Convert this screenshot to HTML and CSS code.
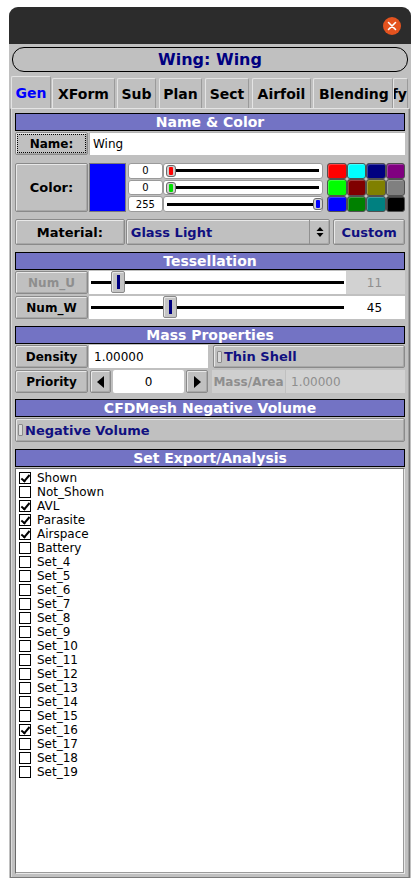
FILE: index.html
```html
<!DOCTYPE html>
<html>
<head>
<meta charset="utf-8">
<link rel="stylesheet" href="styles.css">
</head>
<body>
<div class="window">
  <div class="titlebar">
    <span class="close"><svg width="18" height="18" viewBox="0 0 18 18"><circle cx="9" cy="9" r="9" fill="#e4531f"/><path d="M5.5 5.5 L12.5 12.5 M12.5 5.5 L5.5 12.5" stroke="#fff" stroke-width="1.6" stroke-linecap="round"/></svg></span>
  </div>
  <div class="body">
    <div class="pill">Wing: Wing</div>
    <div class="tabs">
      <div class="tab sel t-gen">Gen</div>
      <div class="tab t-xform">XForm</div>
      <div class="tab t-sub">Sub</div>
      <div class="tab t-plan">Plan</div>
      <div class="tab t-sect">Sect</div>
      <div class="tab t-airfoil">Airfoil</div>
      <div class="tab t-blend">Blending</div>
      <div class="tab t-mod"><span>Modify</span></div>
    </div>
    <div class="panel">
      <div class="hdr">Name &amp; Color</div>
      <div class="row r-name">
        <div class="btn lbl focus">Name:</div>
        <div class="input grow">Wing</div>
      </div>

      <div class="row r-color">
        <div class="btn lbl">Color:</div>
        <div class="cswatch"></div>
        <div class="rgb">
          <div class="rgbrow"><div class="val">0</div><div class="cslider"><div class="track"></div><div class="chandle red" style="left:2px"></div></div></div>
          <div class="rgbrow"><div class="val">0</div><div class="cslider"><div class="track"></div><div class="chandle green" style="left:2px"></div></div></div>
          <div class="rgbrow"><div class="val">255</div><div class="cslider"><div class="track"></div><div class="chandle blue" style="left:149px"></div></div></div>
        </div>
        <div class="palette">
          <div class="sw" style="background:#ff0000"></div>
          <div class="sw" style="background:#00ffff"></div>
          <div class="sw" style="background:#000080"></div>
          <div class="sw" style="background:#800080"></div>
          <div class="sw" style="background:#00ff00"></div>
          <div class="sw" style="background:#800000"></div>
          <div class="sw" style="background:#808000"></div>
          <div class="sw" style="background:#808080"></div>
          <div class="sw" style="background:#0000ff"></div>
          <div class="sw" style="background:#008000"></div>
          <div class="sw" style="background:#008080"></div>
          <div class="sw" style="background:#000000"></div>
        </div>
      </div>

      <div class="row r-mat">
        <div class="btn matlbl">Material:</div>
        <div class="btn choice">
          <span class="choice-text">Glass Light</span>
          <span class="choice-arrow"><svg width="8" height="12" viewBox="0 0 8 12"><path d="M4 1 L7.5 5 L0.5 5 Z M4 11 L7.5 7 L0.5 7 Z" fill="#000"/></svg></span>
        </div>
        <div class="btn custom">Custom</div>
      </div>

      <div class="hdr">Tessellation</div>
      <div class="row r-tessu">
        <div class="btn lbl dim">Num_U</div>
        <div class="slider"><div class="strack"></div><div class="shandle" style="left:22px"></div></div>
        <div class="numval dimval">11</div>
      </div>
      <div class="row r-tessw">
        <div class="btn lbl">Num_W</div>
        <div class="slider"><div class="strack"></div><div class="shandle" style="left:74px"></div></div>
        <div class="numval">45</div>
      </div>

      <div class="hdr">Mass Properties</div>
      <div class="row r-dens">
        <div class="btn lbl">Density</div>
        <div class="input dens">1.00000</div>
        <div class="btn toggle thin"><span class="led"></span>Thin Shell</div>
      </div>
      <div class="row r-prio">
        <div class="btn lbl">Priority</div>
        <div class="btn arrow a-left"><svg width="7" height="12" viewBox="0 0 7 12"><path d="M7 0 L0 6 L7 12 Z" fill="#000"/></svg></div>
        <div class="input prio">0</div>
        <div class="btn arrow a-right"><svg width="7" height="12" viewBox="0 0 7 12"><path d="M0 0 L7 6 L0 12 Z" fill="#000"/></svg></div>
        <div class="massarea">
          <div class="ma-lbl">Mass/Area</div>
          <div class="ma-val">1.00000</div>
        </div>
      </div>

      <div class="hdr">CFDMesh Negative Volume</div>
      <div class="row r-neg">
        <div class="btn toggle neg"><span class="led"></span>Negative Volume</div>
      </div>

      <div class="hdr">Set Export/Analysis</div>
      <div class="list">
        <div class="item"><span class="cb on"></span>Shown</div>
        <div class="item"><span class="cb"></span>Not_Shown</div>
        <div class="item"><span class="cb on"></span>AVL</div>
        <div class="item"><span class="cb on"></span>Parasite</div>
        <div class="item"><span class="cb on"></span>Airspace</div>
        <div class="item"><span class="cb"></span>Battery</div>
        <div class="item"><span class="cb"></span>Set_4</div>
        <div class="item"><span class="cb"></span>Set_5</div>
        <div class="item"><span class="cb"></span>Set_6</div>
        <div class="item"><span class="cb"></span>Set_7</div>
        <div class="item"><span class="cb"></span>Set_8</div>
        <div class="item"><span class="cb"></span>Set_9</div>
        <div class="item"><span class="cb"></span>Set_10</div>
        <div class="item"><span class="cb"></span>Set_11</div>
        <div class="item"><span class="cb"></span>Set_12</div>
        <div class="item"><span class="cb"></span>Set_13</div>
        <div class="item"><span class="cb"></span>Set_14</div>
        <div class="item"><span class="cb"></span>Set_15</div>
        <div class="item"><span class="cb on"></span>Set_16</div>
        <div class="item"><span class="cb"></span>Set_17</div>
        <div class="item"><span class="cb"></span>Set_18</div>
        <div class="item"><span class="cb"></span>Set_19</div>
      </div>
    </div>
  </div>
</div>
</body>
</html>
```

FILE: styles.css
```css
* { box-sizing: border-box; }
body {
  margin: 0;
  background: #ffffff;
  font-family: "DejaVu Sans", "Liberation Sans", sans-serif;
  color: #000;
}
.window {
  margin: 7px 0 0 9px;
  width: 402px;
  height: 871px;
  background: #c0c0c0;
  border-radius: 9px 9px 0 0;
  overflow: hidden;
  display: flex;
  flex-direction: column;
}
.titlebar {
  height: 37px;
  background: #2c2c2c;
  display: flex;
  align-items: center;
  justify-content: flex-end;
  padding-right: 10px;
  flex: none;
}
.close { width: 18px; height: 18px; display: block; }
.close svg { display: block; }
.body {
  flex: 1;
  display: flex;
  flex-direction: column;
  padding: 3px 1px 0 1px;
  min-height: 0;
}
.pill {
  margin: 0 2px;
  height: 25px;
  border: 1px solid #000;
  border-radius: 12px;
  color: #000080;
  font-weight: bold;
  font-size: 16px;
  display: flex;
  align-items: center;
  justify-content: center;
  flex: none;
}
.tabs {
  margin-top: 4px;
  height: 32px;
  display: flex;
  align-items: flex-end;
  padding-left: 1px;
  flex: none;
  overflow: hidden;
  position: relative;
  z-index: 1;
}
.tab {
  height: 30px;
  font-size: 14px;
  font-weight: bold;
  display: flex;
  align-items: center;
  justify-content: center;
  border: 1px solid #9a9a9a;
  border-top-color: #e4e4e4;
  border-left-color: #e4e4e4;
  border-bottom: none;
  border-radius: 2px 2px 0 0;
  background: #c0c0c0;
  white-space: nowrap;
  overflow: hidden;
  padding-top: 1px;
}
.tab.sel {
  height: 33px;
  color: #0000ff;
  margin-bottom: -1px;
  padding-bottom: 1px;
}
.t-gen { width: 40px; margin-right: 1px; }
.t-xform { width: 63px; margin-right: 2px; }
.t-sub { width: 39px; margin-right: 3px; }
.t-plan { width: 43px; margin-right: 3px; }
.t-sect { width: 44px; margin-right: 3px; }
.t-airfoil { width: 59px; margin-right: 2px; }
.t-blend { width: 80px; justify-content: flex-start; padding-left: 5px; }
.t-mod { width: 15px; justify-content: flex-end; }
.t-mod span { flex: none; }

.panel {
  flex: 1;
  min-height: 0;
  border: 1px solid #7a7a7a;
  border-top-color: #e4e4e4;
  border-left-color: #7a7a7a;
  box-shadow: inset 1px 0 #dcdcdc, inset -1px 0 #a0a0a0;
  padding: 4px 4px 3px 4px;
  display: flex;
  flex-direction: column;
}
.hdr {
  height: 18px;
  flex: none;
  background: #7373c4;
  border: 1px solid #000;
  color: #fff;
  font-weight: bold;
  font-size: 14px;
  display: flex;
  align-items: center;
  justify-content: center;
  margin-bottom: 1px;
}
.row { display: flex; flex: none; }
.btn {
  background: #c0c0c0;
  border: 1px solid #8a8a8a;
  border-radius: 2px;
  box-shadow: inset 1px 1px #e8e8e8, inset -1px -1px #a8a8a8;
  font-weight: bold;
  font-size: 12px;
  display: flex;
  align-items: center;
  justify-content: center;
  white-space: nowrap;
}
.lbl { width: 73px; flex: none; }
.focus { position: relative; }
.focus::after {
  content: "";
  position: absolute;
  inset: 1px;
  border: 1px dotted #000;
}
.dim { color: #8e8e8e; }
.input {
  background: #fff;
  font-size: 12px;
  display: flex;
  align-items: center;
  padding-left: 3px;
  border-top: 1px solid #b4b4b4;
  border-left: 1px solid #b4b4b4;
}
.grow { flex: 1; margin-left: 1px; }

.r-name { height: 23px; margin-bottom: 8px; }

.r-color { height: 49px; margin-bottom: 7px; }
.r-color .lbl { height: 49px; font-size: 13px; }
.cswatch { width: 37px; margin-left: 1px; background: #0000ff; border: 1px solid #7a7a7a; }
.rgb { width: 196px; margin-left: 2px; display: flex; flex-direction: column; gap: 1px; padding-top: 0; }
.rgbrow { height: 15.7px; display: flex; }
.val {
  width: 35px;
  background: #fff;
  border: 1px solid #9a9a9a;
  border-radius: 3px;
  font-size: 10px;
  display: flex;
  align-items: center;
  justify-content: center;
}
.cslider {
  flex: 1;
  background: #fff;
  border: 1px solid #9a9a9a;
  border-radius: 3px;
  position: relative;
}
.track {
  position: absolute;
  left: 3px;
  right: 3px;
  top: 50%;
  height: 3px;
  margin-top: -1.5px;
  background: #000;
}
.chandle {
  position: absolute;
  top: 1px;
  width: 10px;
  height: 12px;
  border: 1px solid #6a6a6a;
  border-radius: 3px;
  background: #cfcfcf;
  padding: 1px 2px;
}
.chandle::after { content: ""; display: block; width: 100%; height: 100%; border-radius: 1px; }
.chandle.red::after { background: #ff0000; }
.chandle.green::after { background: #00e000; }
.chandle.blue::after { background: #0000ff; }
.palette {
  width: 78px;
  margin-left: 4px;
  display: grid;
  grid-template-columns: repeat(4, 1fr);
  grid-template-rows: repeat(3, 1fr);
}
.sw {
  border: 1px solid #505050;
  border-radius: 3px;
  box-shadow: inset 1px 1px rgba(255,255,255,0.25);
}

.r-mat { height: 26px; margin-bottom: 7px; }
.matlbl { width: 110px; font-size: 13px; }
.choice {
  width: 205px;
  margin-left: 1px;
  justify-content: space-between;
  color: #101080;
  font-size: 13px;
  padding-left: 4px;
}
.choice-arrow {
  width: 20px;
  height: 100%;
  border-left: 1px solid #909090;
  display: flex;
  align-items: center;
  justify-content: center;
}
.custom { width: 72px; margin-left: 3px; color: #101080; font-size: 13px; }

.r-tessu { height: 23px; margin-bottom: 2px; }
.r-tessw { height: 23px; margin-bottom: 7px; }
.slider {
  width: 257px;
  margin-left: 1px;
  background: #fff;
  position: relative;
}
.strack {
  position: absolute;
  left: 2px;
  right: 2px;
  top: 50%;
  margin-top: -1.5px;
  height: 3px;
  background: #000;
}
.shandle {
  position: absolute;
  top: 0;
  bottom: 1px;
  width: 14px;
  background: #c4c4c4;
  border: 1px solid #8a8a8a;
  border-radius: 2px;
  box-shadow: inset 1px 1px #e6e6e6;
}
.shandle::after {
  content: "";
  position: absolute;
  left: 5px;
  top: 3px;
  bottom: 3px;
  width: 3px;
  background: #000080;
}
.numval {
  flex: 1;
  background: #fff;
  font-size: 12px;
  display: flex;
  align-items: center;
  justify-content: center;
  padding-right: 2px;
}
.dimval { background: #d2d2d2; color: #8e8e8e; }

.r-dens { height: 23px; margin-bottom: 2px; }
.dens { width: 119px; margin-left: 1px; padding-left: 5px; border: none; }
.toggle {
  justify-content: flex-start;
  color: #101080;
  font-size: 13px;
  padding-left: 3px;
}
.thin { flex: 1; margin-left: 5px; }
.led {
  width: 5px;
  height: 12px;
  border: 1px solid #8a8a8a;
  background: #dadada;
  border-radius: 1px;
  margin-right: 2px;
}
.r-prio { height: 23px; margin-bottom: 6px; }
.arrow { width: 21px; flex: none; margin-left: 2px; }
.a-right { width: 22px; margin-left: 2px; }
.prio {
  width: 71px;
  margin-left: 2px;
  justify-content: center;
  padding-left: 0;
  font-size: 12px;
  border: none;
  border-radius: 2px;
}
.massarea {
  flex: 1;
  margin-left: 4px;
  display: flex;
  background: #cfcfcf;
}
.ma-lbl {
  width: 74px;
  color: #8e8e8e;
  font-weight: bold;
  font-size: 12px;
  display: flex;
  align-items: center;
  justify-content: center;
  border-right: 1px solid #c0c0c0;
}
.ma-val {
  flex: 1;
  color: #8e8e8e;
  font-size: 12px;
  display: flex;
  align-items: center;
  padding-left: 5px;
  background: #d2d2d2;
}

.r-neg { height: 24px; margin-bottom: 7px; }
.neg { flex: 1; padding-left: 2px; }

.list {
  flex: 1;
  min-height: 0;
  background: #fff;
  border: 1px solid #6a6a6a;
  border-right-color: #e8e8e8;
  border-bottom-color: #e8e8e8;
  box-shadow: inset -1px -1px #9a9a9a;
  padding: 2px 0 0 3px;
  overflow: hidden;
}
.item {
  height: 14px;
  display: flex;
  align-items: center;
  font-size: 12px;
}
.cb {
  width: 12px;
  height: 12px;
  border: 1px solid #000;
  margin-right: 6px;
  position: relative;
  background: #fff;
  flex: none;
}
.cb.on::after {
  content: "";
  position: absolute;
  left: 3px;
  top: 0px;
  width: 3px;
  height: 7px;
  border-right: 2px solid #000;
  border-bottom: 2px solid #000;
  transform: rotate(40deg);
}
```
